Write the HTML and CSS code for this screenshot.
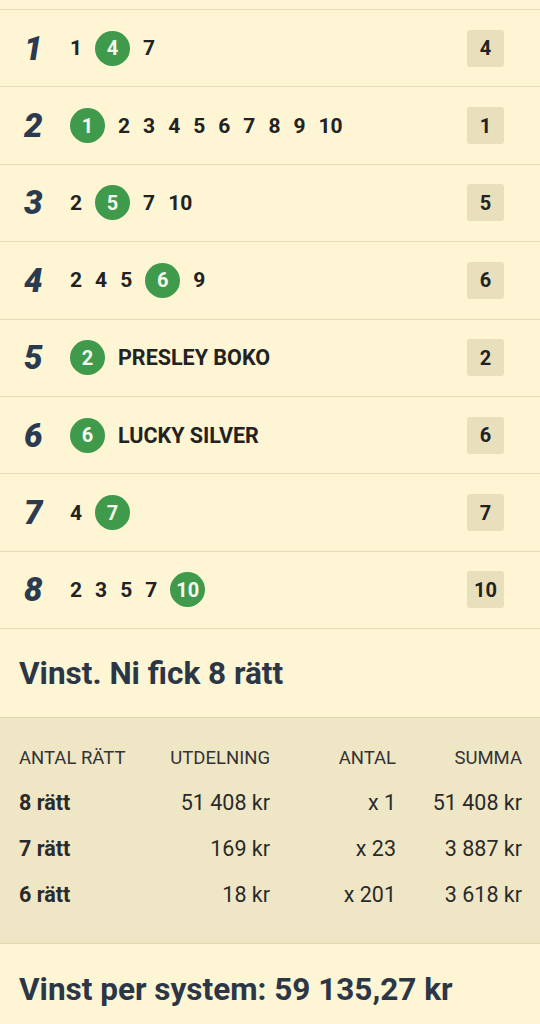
FILE: index.html
```html
<!DOCTYPE html>
<html lang="sv">
<head>
  <meta charset="UTF-8">
  <meta name="viewport" content="width=device-width, initial-scale=1.0">
  <title>Rättning</title>
  <link rel="stylesheet" href="styles.css">
</head>
<body>
  <div class="page">
    <ul class="races">
      <li class="race">
        <span class="race-no">1</span>
        <div class="picks"><span>1</span><span class="hit">4</span><span>7</span></div>
        <span class="winner">4</span>
      </li>
      <li class="race">
        <span class="race-no">2</span>
        <div class="picks"><span class="hit">1</span><span>2</span><span>3</span><span>4</span><span>5</span><span>6</span><span>7</span><span>8</span><span>9</span><span>10</span></div>
        <span class="winner">1</span>
      </li>
      <li class="race">
        <span class="race-no">3</span>
        <div class="picks"><span>2</span><span class="hit">5</span><span>7</span><span>10</span></div>
        <span class="winner">5</span>
      </li>
      <li class="race">
        <span class="race-no">4</span>
        <div class="picks"><span>2</span><span>4</span><span>5</span><span class="hit">6</span><span>9</span></div>
        <span class="winner">6</span>
      </li>
      <li class="race">
        <span class="race-no">5</span>
        <div class="picks"><span class="hit">2</span><span class="horse">PRESLEY BOKO</span></div>
        <span class="winner">2</span>
      </li>
      <li class="race">
        <span class="race-no">6</span>
        <div class="picks"><span class="hit">6</span><span class="horse">LUCKY SILVER</span></div>
        <span class="winner">6</span>
      </li>
      <li class="race">
        <span class="race-no">7</span>
        <div class="picks"><span>4</span><span class="hit">7</span></div>
        <span class="winner">7</span>
      </li>
      <li class="race">
        <span class="race-no">8</span>
        <div class="picks"><span>2</span><span>3</span><span>5</span><span>7</span><span class="hit">10</span></div>
        <span class="winner">10</span>
      </li>
    </ul>

    <div class="result">
      <h2>Vinst. Ni fick 8 rätt</h2>
    </div>

    <div class="payout">
      <table>
        <thead>
          <tr><th>Antal rätt</th><th>Utdelning</th><th>Antal</th><th>Summa</th></tr>
        </thead>
        <tbody>
          <tr><td>8 rätt</td><td>51 408 kr</td><td>x 1</td><td>51 408 kr</td></tr>
          <tr><td>7 rätt</td><td>169 kr</td><td>x 23</td><td>3 887 kr</td></tr>
          <tr><td>6 rätt</td><td>18 kr</td><td>x 201</td><td>3 618 kr</td></tr>
        </tbody>
      </table>
    </div>

    <div class="total">
      <h2>Vinst per system: 59 135,27 kr</h2>
    </div>
  </div>
</body>
</html>
```

FILE: styles.css
```css
body {
  margin: 0;
  background-color: #fdf5d3;
  font-family: Roboto, 'Liberation Sans', Arial, sans-serif;
  color: #222;
}
.page {
  padding-top: 9px;
}
.races {
  list-style: none;
  margin: 0;
  padding: 0;
  border-top: 1px solid #e5dcb6;
}
.race {
  display: flex;
  align-items: center;
  height: 76.4px;
  padding: 0 36px 0 24px;
  border-bottom: 1px solid #e5dcb6;
}
.race-no {
  width: 46px;
  font-size: 33px;
  font-weight: 900;
  font-style: italic;
  color: #2b3a50;
}
.picks {
  flex: 1;
  display: flex;
  align-items: center;
  gap: 13px;
  font-size: 21px;
  font-weight: 700;
}
.hit {
  display: inline-flex;
  align-items: center;
  justify-content: center;
  width: 35px;
  height: 35px;
  border-radius: 50%;
  background-color: #3f9a4b;
  color: #f4f8ee;
  font-size: 20px;
}
.horse {
  font-size: 21.5px;
}
.winner {
  display: inline-flex;
  align-items: center;
  justify-content: center;
  width: 37px;
  height: 37px;
  border-radius: 3px;
  background-color: #e8dfbd;
  font-size: 20px;
  font-weight: 700;
}
.result, .total {
  padding: 0 19px;
}
.result {
  height: 88px;
  display: flex;
  align-items: center;
  border-bottom: 1px solid #e2d8b0;
}
.total {
  height: 90px;
  display: flex;
  align-items: center;
  border-top: 1px solid #e2d8b0;
}
h2 {
  margin: 0;
  font-size: 31.5px;
  font-weight: 700;
  color: #2b3747;
}
.payout {
  background-color: #efe6c6;
  padding: 29px 18px 26px 19px;
}
table {
  width: 100%;
  border-collapse: collapse;
}
th {
  font-weight: 400;
  text-transform: uppercase;
  font-size: 18.5px;
  color: #333;
  padding: 0 0 10px;
  text-align: right;
}
td {
  padding: 0;
  height: 46px;
  text-align: right;
  font-size: 21.5px;
  color: #2a2a2a;
}
th:first-child, td:first-child {
  text-align: left;
}
td:first-child {
  font-weight: 700;
  width: 120px;
}
th:nth-child(2), td:nth-child(2) {
  width: 131px;
}
th:nth-child(3), td:nth-child(3) {
  width: 126px;
}
```
